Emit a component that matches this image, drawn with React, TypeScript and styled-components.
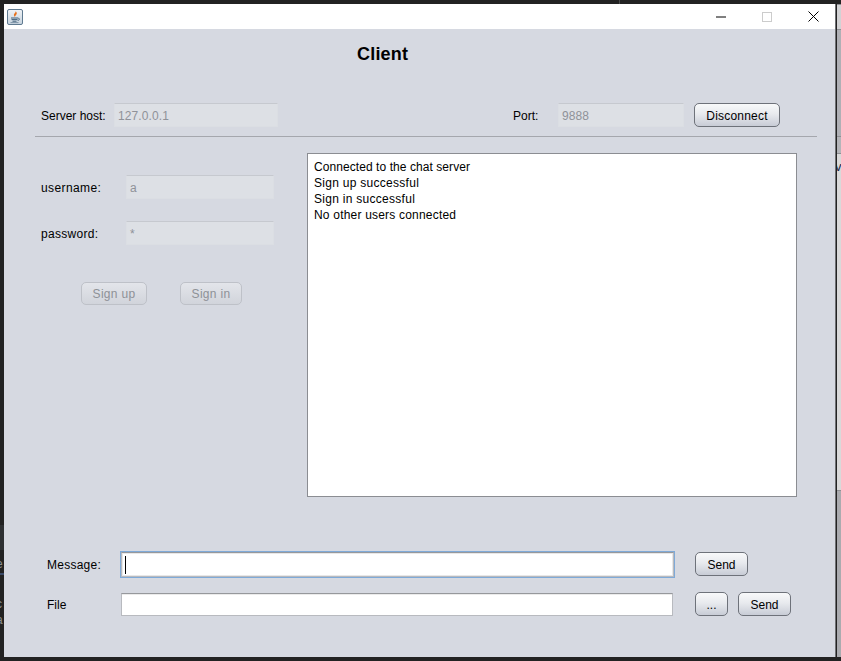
import styled, { createGlobalStyle } from 'styled-components';

const GlobalStyle = createGlobalStyle`
  html, body {
    margin: 0;
    padding: 0;
    background: #222222;
  }
`;

const Desktop = styled.div`
  position: relative;
  width: 841px;
  height: 661px;
  overflow: hidden;
  padding: 4px 0 0 4px;
  box-sizing: border-box;
  background: #222222;
  font-family: "Liberation Sans", Arial, sans-serif;
  font-size: 12px;
  color: #000000;
`;

// slivers of the other windows that stick out behind the app
const BackWindow = styled.div<{ $top: number; $height: number; $color: string }>`
  position: absolute;
  left: 837px;
  width: 4px;
  top: ${(p) => p.$top}px;
  height: ${(p) => p.$height}px;
  box-sizing: border-box;
  border-top: 1px solid #8e8f93;
  background: ${(p) => p.$color};
  overflow: hidden;
  color: #1c2a4a;
  font-size: 13px;
  line-height: 26px;
  text-indent: -2px;
`;

const BackPanel = styled.div<{ $top: number; $height: number; $color: string }>`
  position: absolute;
  left: 0;
  width: 4px;
  top: ${(p) => p.$top}px;
  height: ${(p) => p.$height}px;
  background: ${(p) => p.$color};
`;

const LeftShard = styled.div<{ $top: number }>`
  position: absolute;
  left: 0;
  width: 4px;
  height: 16px;
  top: ${(p) => p.$top}px;
  overflow: hidden;
  font-size: 12px;
  line-height: 16px;
  text-indent: -4px;
  color: #8b8e90;
`;

const TopSeam = styled.div`
  position: absolute;
  top: 0;
  left: 619px;
  width: 1px;
  height: 4px;
  background: #4a4a4a;
`;

const Window = styled.div`
  width: 832px;
  height: 653px;
  box-sizing: border-box;
  border-right: 1px solid #6f7073;
  background: #d6d9e1;
`;

const TitleBar = styled.div`
  display: flex;
  align-items: center;
  height: 25px;
  padding-left: 3px;
  background: #ffffff;
`;

const WindowControls = styled.div`
  display: flex;
  margin: 0 -1px 0 auto;
`;

const WindowControl = styled.div`
  display: flex;
  align-items: center;
  justify-content: center;
  width: 46px;
  height: 25px;
`;

const Heading = styled.h1`
  margin: 0;
  height: 50px;
  padding-left: 353px;
  font-size: 18px;
  font-weight: 700;
  letter-spacing: 0.2px;
  line-height: 51px;
`;

const Label = styled.span<{ $width: number; $offset?: number; $tracking?: number }>`
  flex: none;
  width: ${(p) => p.$width}px;
  margin-left: ${(p) => p.$offset || 0}px;
  letter-spacing: ${(p) => p.$tracking || 0}px;
`;

const Field = styled.div<{ $width: number; $disabled?: boolean; $focused?: boolean; $height?: number }>`
  flex: none;
  display: flex;
  align-items: center;
  box-sizing: border-box;
  width: ${(p) => p.$width}px;
  height: ${(p) => p.$height || 24}px;
  padding: ${(p) => (p.$disabled ? '2px 0 0 3px' : '0 0 0 3px')};
  letter-spacing: 0.1px;
  background: ${(p) => (p.$disabled ? '#dde0e5' : '#ffffff')};
  color: ${(p) => (p.$disabled ? '#8f9299' : '#000000')};
  border: 1px solid ${(p) => (p.$disabled ? '#dbdee3' : '#b8babf')};
  border-top-color: ${(p) => (p.$disabled ? '#c6c9cf' : '#96989c')};
  box-shadow: ${(p) =>
    p.$focused
      ? '0 0 0 1px #7faad8, inset 0 0 0 1px #e8e8e8'
      : p.$disabled
        ? 'none'
        : 'inset 0 1px 0 #ebebeb'};
`;

const Caret = styled.span`
  width: 1px;
  height: 18px;
  background: #000000;
`;

const Button = styled.button<{ $width: number; $offset?: number; $tracking?: number }>`
  flex: none;
  box-sizing: border-box;
  width: ${(p) => p.$width}px;
  height: 24px;
  margin-left: ${(p) => p.$offset || 0}px;
  padding: 0;
  border: 1px solid #6e727a;
  border-radius: 5px;
  background: linear-gradient(#f8f9fa 0%, #e8eaee 45%, #c8ccd6 100%);
  color: #000000;
  font: inherit;
  letter-spacing: ${(p) => p.$tracking || 0}px;

  &:disabled {
    border-color: #bec1c8;
    background: linear-gradient(#e3e5ea, #d1d4db);
    color: #8e9197;
  }
`;

const ConnectionRow = styled.div`
  display: flex;
  align-items: center;
  height: 24px;
  margin-top: 24px;
  padding-left: 37px;

  ${Label} {
    padding-top: 2px;
  }

  ${Button} {
    padding-top: 2px;
  }
`;

const Divider = styled.div`
  width: 782px;
  height: 1px;
  margin: 9px 0 0 31px;
  background: #a5a7ad;
`;

const Main = styled.div`
  display: flex;
  margin-top: 16px;
  padding-left: 37px;
`;

const SignPanel = styled.div`
  flex: none;
  display: flex;
  flex-direction: column;
  gap: 22px;
  width: 266px;
  padding-top: 22px;
`;

const FormRow = styled.div`
  display: flex;
  align-items: center;

  ${Label} {
    padding-top: 2px;
  }
`;

const SignButtons = styled.div`
  display: flex;
  margin-top: 15px;
  padding-left: 40px;

  ${Button} {
    height: 23px;
  }
`;

const ChatLog = styled.div`
  box-sizing: border-box;
  width: 490px;
  height: 344px;
  padding: 5px 6px;
  background: #ffffff;
  border: 1px solid #8b8d92;
  line-height: 16px;
`;

const ChatLine = styled.div<{ $tracking: number }>`
  letter-spacing: ${(p) => p.$tracking}px;
`;

const Composer = styled.div`
  display: flex;
  flex-direction: column;
  gap: 15px;
  margin-top: 55px;
  padding-left: 43px;
`;

const ComposerRow = styled.div`
  display: flex;
  align-items: flex-start;
  height: 25px;

  ${Label} {
    line-height: 27px;
  }

  ${Field} {
    align-self: center;
  }

  ${Button} {
    padding-top: 2px;
  }
`;

const JavaIcon = () => (
  <svg width="16" height="16" viewBox="0 0 16 16">
    <defs>
      <linearGradient id="javaTile" x1="0" y1="0" x2="0" y2="1">
        <stop offset="0" stopColor="#f0f3f6" />
        <stop offset="1" stopColor="#c6d2dd" />
      </linearGradient>
    </defs>
    <rect x="0.5" y="0.5" width="15" height="15" rx="1.5" fill="url(#javaTile)" stroke="#5f7a90" />
    <path d="M8.5 2C9.5 3.5 6.5 4.5 7 6.5 7.3 7.4 8 8 8 8 7.6 6.8 10 5.6 9.8 4.2 9.7 3.4 9 2.6 8.5 2Z" fill="#e8701a" />
    <path d="M4 9h7M4.5 10.6h6M5.5 12.2h4" stroke="#3f5f7a" strokeWidth="1" fill="none" />
    <path d="M11.3 9.2c1.6 0 1.6 2-.6 2.2" stroke="#3f5f7a" strokeWidth="1" fill="none" />
    <path d="M3.5 13.6h8" stroke="#7d93a6" strokeWidth="1" />
  </svg>
);

const MinimizeIcon = () => (
  <svg width="10" height="10" viewBox="0 0 10 10">
    <path d="M0 5h10" stroke="#000000" strokeWidth="1" />
  </svg>
);

const MaximizeIcon = () => (
  <svg width="10" height="10" viewBox="0 0 10 10">
    <rect x="0.5" y="0.5" width="9" height="9" fill="none" stroke="#cccccc" />
  </svg>
);

const CloseIcon = () => (
  <svg width="11" height="11" viewBox="0 0 11 11">
    <path d="M0.5 0.5l10 10M10.5 0.5l-10 10" stroke="#000000" strokeWidth="1" />
  </svg>
);

const messages = [
  { text: 'Connected to the chat server', tracking: 0.07 },
  { text: 'Sign up successful', tracking: 0.28 },
  { text: 'Sign in successful', tracking: 0.28 },
  { text: 'No other users connected', tracking: 0.2 },
];

export default function App() {
  return (
    <Desktop>
      <GlobalStyle />
      <TopSeam />
      <BackPanel $top={525} $height={25} $color="#2e3032" />
      <BackPanel $top={573} $height={2} $color="#3a4a68" />
      <LeftShard $top={556}>e</LeftShard>
      <LeftShard $top={596}>c</LeftShard>
      <LeftShard $top={612}>a</LeftShard>
      <BackWindow $top={4} $height={25} $color="#d2d2d4" />
      <BackWindow $top={29} $height={107} $color="#afb0b5" />
      <BackWindow $top={136} $height={17} $color="#b4b5b9" />
      <BackWindow $top={153} $height={337} $color="#d9d9d9">v</BackWindow>
      <BackWindow $top={490} $height={167} $color="#aaabaf" />
      <Window>
        <TitleBar>
          <JavaIcon />
          <WindowControls>
            <WindowControl><MinimizeIcon /></WindowControl>
            <WindowControl><MaximizeIcon /></WindowControl>
            <WindowControl><CloseIcon /></WindowControl>
          </WindowControls>
        </TitleBar>
        <Heading>Client</Heading>
        <ConnectionRow>
          <Label $width={73}>Server host:</Label>
          <Field $width={164} $disabled>127.0.0.1</Field>
          <Label $width={45} $offset={235}>Port:</Label>
          <Field $width={126} $disabled>9888</Field>
          <Button $width={86} $offset={10} $tracking={0.2}>Disconnect</Button>
        </ConnectionRow>
        <Divider />
        <Main>
          <SignPanel>
            <FormRow>
              <Label $width={85} $tracking={0.4}>username:</Label>
              <Field $width={148} $disabled>a</Field>
            </FormRow>
            <FormRow>
              <Label $width={85} $tracking={0.3}>password:</Label>
              <Field $width={148} $disabled>*</Field>
            </FormRow>
            <SignButtons>
              <Button $width={66} $tracking={0.3} disabled>Sign up</Button>
              <Button $width={62} $offset={33} $tracking={0.3} disabled>Sign in</Button>
            </SignButtons>
          </SignPanel>
          <ChatLog>
            {messages.map((message) => (
              <ChatLine key={message.text} $tracking={message.tracking}>{message.text}</ChatLine>
            ))}
          </ChatLog>
        </Main>
        <Composer>
          <ComposerRow>
            <Label $width={74} $tracking={0.25}>Message:</Label>
            <Field $width={553} $height={25} $focused><Caret /></Field>
            <Button $width={53} $offset={21}>Send</Button>
          </ComposerRow>
          <ComposerRow>
            <Label $width={74}>File</Label>
            <Field $width={552} $height={23} />
            <Button $width={33} $offset={22}>...</Button>
            <Button $width={53} $offset={10}>Send</Button>
          </ComposerRow>
        </Composer>
      </Window>
    </Desktop>
  );
}
